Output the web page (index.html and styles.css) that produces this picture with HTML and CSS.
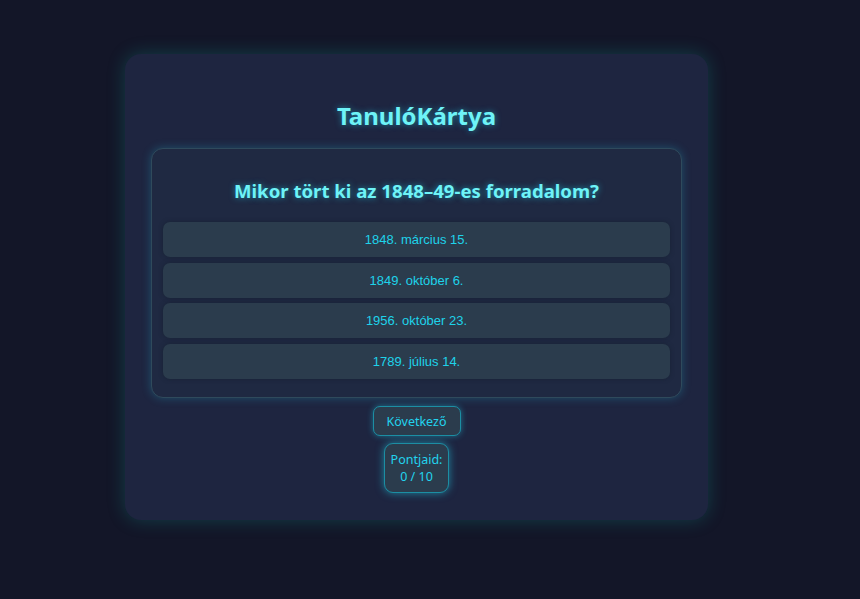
FILE: index.html
```html
<!DOCTYPE html>
<html lang="hu">
<head>
<meta charset="utf-8">
<title>TanulóKártya</title>
<link rel="stylesheet" href="styles.css">
</head>
<body>
<main class="app">
  <h1 class="app-title">TanulóKártya</h1>
  <section class="quiz-card">
    <h2 class="question">Mikor tört ki az 1848–49-es forradalom?</h2>
    <div class="options">
      <button class="option">1848. március 15.</button>
      <button class="option">1849. október 6.</button>
      <button class="option">1956. október 23.</button>
      <button class="option">1789. július 14.</button>
    </div>
  </section>
  <button class="next-btn">Következő</button>
  <div class="score">Pontjaid:<br>0 / 10</div>
</main>
</body>
</html>
```
FILE: styles.css
```css
* { box-sizing: border-box; }
html, body { margin: 0; padding: 0; }
body {
  background: #131628;
  font-family: "Noto Sans", "Open Sans", sans-serif;
  min-height: 599px;
  display: flex;
  justify-content: center;
  align-items: flex-start;
  padding-top: 54px;
  padding-right: 27px;
}
.app {
  width: 583px;
  background: #1e2540;
  border-radius: 16px;
  padding: 44px 26px 27px;
  display: flex;
  flex-direction: column;
  align-items: center;
  box-shadow: 0 0 18px rgba(20, 184, 166, 0.25);
}
.app-title {
  margin: 0 0 14px;
  font-size: 24px;
  line-height: 36px;
  font-weight: 700;
  color: #6ef3f7;
  text-shadow: 0 0 6px rgba(34, 211, 238, 0.55);
}
.quiz-card {
  width: 100%;
  border: 1px solid #2f4a5c;
  border-radius: 12px;
  background: #1f2942;
  padding: 29px 11px 18px;
  box-shadow: 0 0 10px rgba(34, 211, 238, 0.25);
}
.question {
  margin: 0 0 18px;
  text-align: center;
  font-size: 18.6px;
  line-height: 26px;
  font-weight: 700;
  color: #6ef3f7;
  text-shadow: 0 0 6px rgba(34, 211, 238, 0.6);
}
.options {
  display: flex;
  flex-direction: column;
  gap: 5.7px;
}
.option {
  display: block;
  width: 100%;
  height: 35px;
  border: none;
  border-radius: 7px;
  background: #2b3c4d;
  color: #1ed3ea;
  font-family: "Liberation Sans", Arial, sans-serif;
  font-size: 13px;
  box-shadow: 0 0 4px rgba(20, 30, 45, 0.6);
  cursor: pointer;
}
.next-btn {
  margin-top: 8px;
  height: 30px;
  width: 88px;
  padding: 0;
  border: 1px solid #1c8ea3;
  border-radius: 7px;
  background: #2b3c4d;
  color: #22d3ee;
  font-family: "Noto Sans", "Open Sans", sans-serif;
  font-size: 12.5px;
  box-shadow: 0 0 6px rgba(34, 211, 238, 0.45);
  cursor: pointer;
}
.score {
  margin-top: 7px;
  width: 65px;
  height: 50px;
  padding: 7px 0;
  border: 1px solid #1c8ea3;
  border-radius: 9px;
  background: #2b3c4d;
  color: #22d3ee;
  font-size: 12.5px;
  line-height: 17px;
  text-align: center;
  box-shadow: 0 0 8px rgba(34, 211, 238, 0.55);
}
```
